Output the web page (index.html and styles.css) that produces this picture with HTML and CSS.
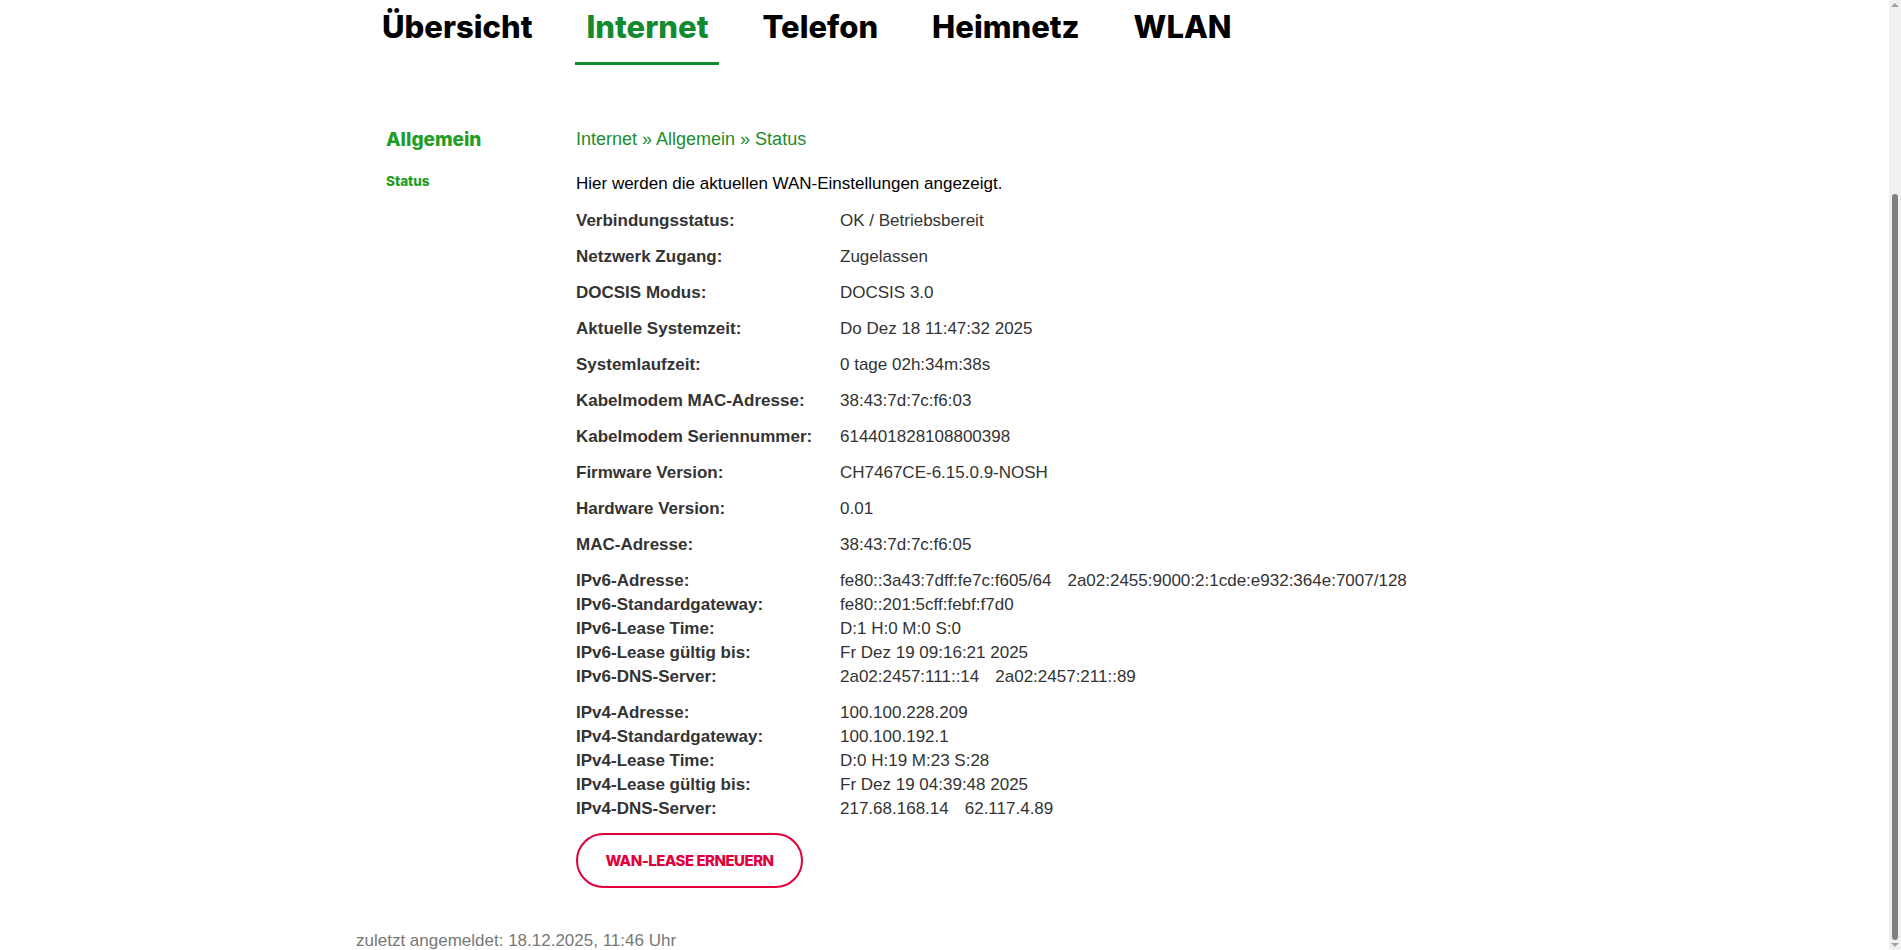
FILE: index.html
```html
<!DOCTYPE html>
<html lang="de">
<head>
<meta charset="utf-8">
<title>Internet – Allgemein – Status</title>
<link rel="stylesheet" href="styles.css">
</head>
<body>
<div class="page">
  <nav class="mainnav">
    <a class="nav-item">Übersicht</a>
    <a class="nav-item active">Internet</a>
    <a class="nav-item">Telefon</a>
    <a class="nav-item">Heimnetz</a>
    <a class="nav-item">WLAN</a>
  </nav>

  <div class="content">
    <aside class="sidebar">
      <div class="side-title">Allgemein</div>
      <div class="side-link">Status</div>
    </aside>

    <main class="main">
      <div class="breadcrumb">Internet » Allgemein » Status</div>
      <p class="intro">Hier werden die aktuellen WAN-Einstellungen angezeigt.</p>

      <div class="info">
        <div class="row"><span class="label">Verbindungsstatus:</span><span class="value">OK / Betriebsbereit</span></div>
        <div class="row"><span class="label">Netzwerk Zugang:</span><span class="value">Zugelassen</span></div>
        <div class="row"><span class="label">DOCSIS Modus:</span><span class="value">DOCSIS 3.0</span></div>
        <div class="row"><span class="label">Aktuelle Systemzeit:</span><span class="value">Do Dez 18 11:47:32 2025</span></div>
        <div class="row"><span class="label">Systemlaufzeit:</span><span class="value">0 tage 02h:34m:38s</span></div>
        <div class="row"><span class="label">Kabelmodem MAC-Adresse:</span><span class="value">38:43:7d:7c:f6:03</span></div>
        <div class="row"><span class="label">Kabelmodem Seriennummer:</span><span class="value">614401828108800398</span></div>
        <div class="row"><span class="label">Firmware Version:</span><span class="value">CH7467CE-6.15.0.9-NOSH</span></div>
        <div class="row"><span class="label">Hardware Version:</span><span class="value">0.01</span></div>
        <div class="row"><span class="label">MAC-Adresse:</span><span class="value">38:43:7d:7c:f6:05</span></div>

        <div class="group">
          <div class="row"><span class="label">IPv6-Adresse:</span><span class="value"><span class="addr">fe80::3a43:7dff:fe7c:f605/64</span><span class="addr">2a02:2455:9000:2:1cde:e932:364e:7007/128</span></span></div>
          <div class="row"><span class="label">IPv6-Standardgateway:</span><span class="value">fe80::201:5cff:febf:f7d0</span></div>
          <div class="row"><span class="label">IPv6-Lease Time:</span><span class="value">D:1 H:0 M:0 S:0</span></div>
          <div class="row"><span class="label">IPv6-Lease gültig bis:</span><span class="value">Fr Dez 19 09:16:21 2025</span></div>
          <div class="row"><span class="label">IPv6-DNS-Server:</span><span class="value"><span class="addr">2a02:2457:111::14</span><span class="addr">2a02:2457:211::89</span></span></div>
        </div>

        <div class="group">
          <div class="row"><span class="label">IPv4-Adresse:</span><span class="value">100.100.228.209</span></div>
          <div class="row"><span class="label">IPv4-Standardgateway:</span><span class="value">100.100.192.1</span></div>
          <div class="row"><span class="label">IPv4-Lease Time:</span><span class="value">D:0 H:19 M:23 S:28</span></div>
          <div class="row"><span class="label">IPv4-Lease gültig bis:</span><span class="value">Fr Dez 19 04:39:48 2025</span></div>
          <div class="row"><span class="label">IPv4-DNS-Server:</span><span class="value"><span class="addr">217.68.168.14</span><span class="addr">62.117.4.89</span></span></div>
        </div>
      </div>

      <button class="btn" type="button">WAN-LEASE ERNEUERN</button>
    </main>
  </div>

  <footer class="lastlogin">zuletzt angemeldet: 18.12.2025, 11:46 Uhr</footer>
</div>

<div class="scrollbar" aria-hidden="true">
  <span class="sb-arrow sb-up"></span>
  <span class="sb-thumb"></span>
  <span class="sb-arrow sb-down"></span>
</div>
</body>
</html>
```

FILE: styles.css
```css
html {
  background: #fff;
}

body {
  margin: 0;
  padding-right: 12px;
  font-family: "Liberation Sans", Arial, sans-serif;
  font-size: 17px;
  color: #333;
  overflow: hidden;
}

.page {
  width: 1177px;
  margin: 0 auto;
}

/* main navigation */
.mainnav {
  display: flex;
  gap: 32px;
  padding: 9px 0 0 15px;
}
.nav-item {
  font-family: Inter, "Noto Sans", sans-serif;
  font-weight: 800;
  font-size: 31px;
  line-height: 36px;
  color: #000;
  padding: 0 11px 17px;
  border-bottom: 3px solid transparent;
  cursor: pointer;
}
.nav-item.active {
  color: #138a30;
  border-bottom-color: #138a30;
}

/* content */
.content {
  display: flex;
  margin-top: 62px;
  padding-left: 30px;
}

.sidebar {
  width: 190px;
  flex: none;
  font-family: Inter, "Noto Sans", sans-serif;
  font-weight: 800;
  color: #1f9e26;
}
.side-title {
  font-size: 19px;
  line-height: 24px;
  margin-top: 1px;
}
.side-link {
  font-size: 13.5px;
  line-height: 20px;
  margin-top: 19px;
}

.main {
  flex: 1;
}

.breadcrumb {
  font-size: 18px;
  line-height: 24px;
  color: #1e8c2d;
}

.intro {
  margin: 21px 0 13px;
  line-height: 24px;
  color: #000;
}

.info {
  display: flex;
  flex-direction: column;
  gap: 12px;
}
.group {
  display: flex;
  flex-direction: column;
}
.row {
  display: grid;
  grid-template-columns: 264px auto;
  line-height: 24px;
}
.label {
  font-weight: 700;
  color: #333;
}
.value {
  color: #333;
}
.addr + .addr {
  margin-left: 16px;
}

.btn {
  display: block;
  margin-top: 12px;
  width: 227px;
  height: 55px;
  border: 2px solid #e2003c;
  border-radius: 28px;
  background: #fff;
  color: #e2003c;
  font-family: Inter, "Noto Sans", sans-serif;
  font-weight: 800;
  font-size: 15px;
  letter-spacing: -0.5px;
  cursor: pointer;
}

.lastlogin {
  margin-top: 43px;
  line-height: 20px;
  color: #777;
}

/* window scrollbar (scrolled to the end) */
.scrollbar {
  position: fixed;
  top: 0;
  right: 0;
  width: 12px;
  height: 100vh;
  background: #f0f0f0;
  display: flex;
  flex-direction: column;
  align-items: center;
}
.sb-arrow {
  width: 0;
  height: 0;
  border-left: 4px solid transparent;
  border-right: 4px solid transparent;
}
.sb-up {
  margin-top: 3px;
  border-bottom: 4px solid #a3a3a3;
}
.sb-thumb {
  margin-top: auto;
  width: 6px;
  height: 746px;
  border-radius: 3px;
  background: #808080;
}
.sb-down {
  margin: 3px 0;
  border-top: 4px solid #a3a3a3;
}
```
